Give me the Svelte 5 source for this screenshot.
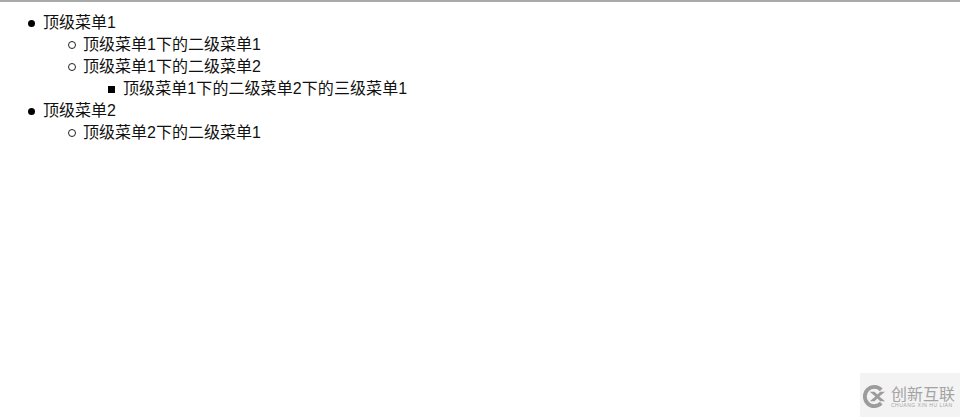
<script>
  const menu = [
    {
      name: '顶级菜单1',
      children: [
        { name: '顶级菜单1下的二级菜单1', children: [] },
        { name: '顶级菜单1下的二级菜单2', children: [{ name: '顶级菜单1下的二级菜单2下的三级菜单1' }] }
      ]
    },
    {
      name: '顶级菜单2',
      children: [{ name: '顶级菜单2下的二级菜单1', children: [] }]
    }
  ];
</script>

<div class="page">
  <ul class="level1">
    {#each menu as top}
      <li>
        {top.name}
        <ul class="level2">
          {#each top.children as second}
            <li>
              {second.name}
              {#if second.children.length}
                <ul class="level3">
                  {#each second.children as third}
                    <li>{third.name}</li>
                  {/each}
                </ul>
              {/if}
            </li>
          {/each}
        </ul>
      </li>
    {/each}
  </ul>

  <div class="watermark">
    <svg class="logo" viewBox="0 0 24 24">
      <path d="M19 5A10 10 0 1 0 19 19" fill="none" stroke="#9c9c9c" stroke-width="4" />
      <path d="M7 7h5l3 3 3-3h5l-6 5 6 5h-5l-3-3-3 3H7l6-5z" fill="#9c9c9c" />
    </svg>
    <div class="brand">
      <span class="cn">创新互联</span>
      <span class="en">CHUANG XIN HU LIAN</span>
    </div>
  </div>
</div>

<style>
  :global(body) {
    margin: 0;
    background: #fff;
  }

  .page {
    position: relative;
    height: 417px;
    box-sizing: border-box;
    border-top: 2px solid #a9a9a9;
    padding: 10px 0 0 3px;
    overflow: hidden;
    font-family: "Liberation Sans", "Noto Sans CJK SC", sans-serif;
    font-size: 16px;
    line-height: 22px;
    color: #111;
  }

  ul {
    margin: 0;
    padding-left: 40px;
    list-style: none;
  }

  li::before {
    content: "";
    display: inline-block;
    box-sizing: border-box;
    vertical-align: 1px;
  }

  .level1 > li::before {
    width: 7px;
    height: 7px;
    margin: 0 8px 0 -15px;
    border-radius: 50%;
    background: #000;
  }

  .level2 > li::before {
    width: 8px;
    height: 8px;
    margin: 0 7px 0 -15px;
    border: 1px solid #222;
    border-radius: 50%;
  }

  .level3 > li {
    letter-spacing: 0.08px;
  }

  .level3 > li::before {
    width: 7px;
    height: 7px;
    margin: 0 8px 0 -15px;
    background: #000;
  }

  .watermark {
    position: absolute;
    right: 0;
    bottom: 0;
    width: 100px;
    height: 44px;
    display: flex;
    align-items: center;
    gap: 5px;
    padding: 3px 0 0 3px;
    box-sizing: border-box;
    background: #f3f3f3;
    color: #a3a3a3;
  }

  .logo {
    width: 23px;
    height: 23px;
    flex: none;
  }

  .brand {
    display: flex;
    flex-direction: column;
  }

  .cn {
    font-family: "Noto Sans CJK SC", sans-serif;
    font-size: 16px;
    line-height: 16px;
    white-space: nowrap;
  }

  .en {
    font-size: 5px;
    line-height: 6px;
    margin-top: 1px;
    letter-spacing: 0.5px;
    white-space: nowrap;
  }
</style>
